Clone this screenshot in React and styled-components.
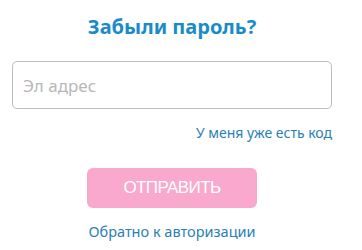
import React from "react";
import styled, { createGlobalStyle } from "styled-components";

const GlobalStyle = createGlobalStyle`
  html, body {
    margin: 0;
    padding: 0;
    background: #ffffff;
  }
  body {
    font-family: "Noto Sans", "Open Sans", sans-serif;
  }
`;

const Form = styled.form`
  width: 320px;
  margin-left: 12px;
  display: flex;
  flex-direction: column;
  align-items: center;
`;

const Title = styled.h2`
  margin: 13px 0 0;
  font-size: 20px;
  line-height: 28px;
  font-weight: 700;
  color: #1a8bc8;
`;

const Input = styled.input`
  box-sizing: border-box;
  margin-top: 20px;
  width: 100%;
  height: 48px;
  padding: 0 10px;
  border: 1px solid #bdbdbd;
  border-radius: 5px;
  font-family: inherit;
  font-size: 17px;
  color: #333;
  outline: none;

  &::placeholder {
    color: #b8b8b8;
  }
`;

const Link = styled.a`
  color: #2a80b3;
  font-size: ${(p) => p.$size || 14}px;
  text-decoration: none;
  cursor: pointer;
`;

const LinkRow = styled.div`
  align-self: stretch;
  display: flex;
  justify-content: flex-end;
  margin-top: 14px;
  line-height: 20px;
`;

const Button = styled.button`
  margin-top: 25px;
  width: 170px;
  height: 40px;
  border: none;
  border-radius: 6px;
  background: #f8a9cd;
  color: #fff;
  font-family: "Liberation Sans Narrow", "Liberation Sans", sans-serif;
  font-size: 17px;
  letter-spacing: -0.6px;
  cursor: pointer;
`;

const BackRow = styled.div`
  margin-top: 13px;
  line-height: 20px;
`;

export default function App() {
  return (
    <>
      <GlobalStyle />
      <Form onSubmit={(e) => e.preventDefault()}>
        <Title>Забыли пароль?</Title>
        <Input type="email" placeholder="Эл адрес" />
        <LinkRow>
          <Link>У меня уже есть код</Link>
        </LinkRow>
        <Button type="submit">ОТПРАВИТЬ</Button>
        <BackRow>
          <Link $size={14.5}>Обратно к авторизации</Link>
        </BackRow>
      </Form>
    </>
  );
}
